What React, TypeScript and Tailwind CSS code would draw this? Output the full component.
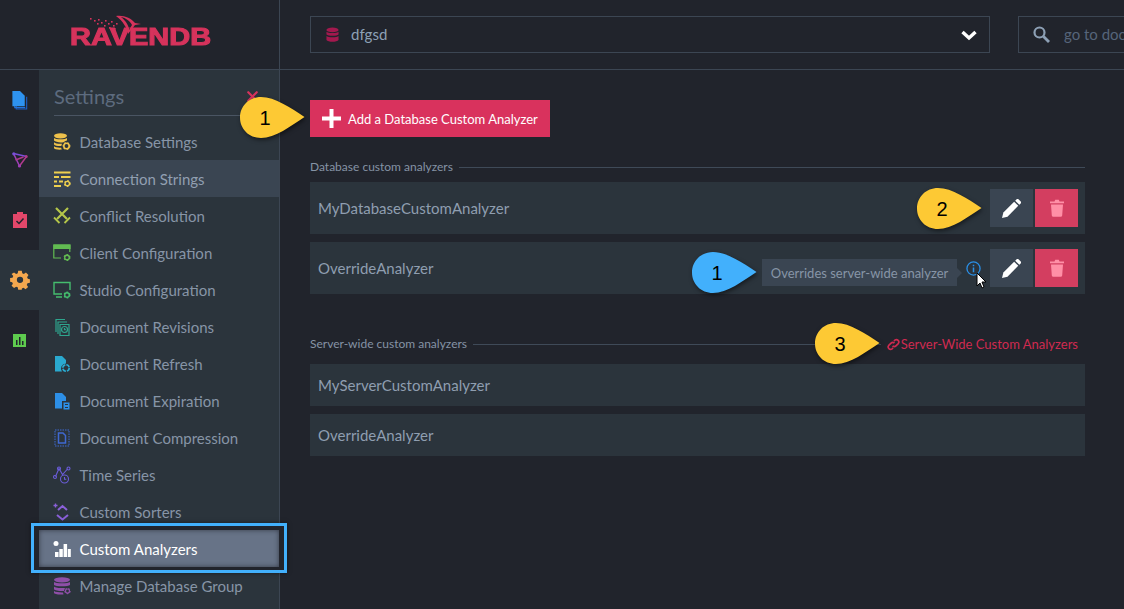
import React from 'react';
import { X } from 'lucide-react';

type IconProps = { className?: string };

const Gear = ({ cx, cy, r = 3.5 }: { cx: number; cy: number; r?: number }) => (
  <g>
    <circle cx={cx} cy={cy} r={r} fill="none" stroke="currentColor" strokeWidth={r * 0.6} />
    <circle cx={cx} cy={cy} r={r + 0.6} fill="none" stroke="currentColor" strokeWidth={1.2} strokeDasharray="1.6 1.6" />
  </g>
);

const DbSettings = ({ className }: IconProps) => (
  <svg viewBox="0 0 18 18" className={className} fill="currentColor">
    <ellipse cx="7.500" cy="2.800" rx="6.500" ry="2.600" />
    <path d="M1 5c1.500 1.700 11.500 1.700 13 0v2.400c-1.200.3-2.800 1-3.500 1.800-3.500.5-8.200 0-9.500-1.600z" />
    <path d="M1 9.300c1.500 1.300 5 1.700 8 1.400l-.7 2.300c-3.300.2-6.200-.4-7.300-1.600z" />
    <path d="M1 13.300c1.400 1.200 4.300 1.600 7.100 1.400l.7 1.900C5 17 1 16.200 1 15z" />
    <Gear cx={13.500} cy={13} r={2.700} />
  </svg>
);

const ConnStrings = ({ className }: IconProps) => (
  <svg viewBox="0 0 18 18" className={className} fill="currentColor">
    <path d="M1 1.500h16.500v2H1zM1 6h5v2H1zM8 6h9.500v2H8zM1 10.500h3v2H1zM6 10.500h4v2H6zM1 15h7v2H1z" />
    <Gear cx={14.300} cy={13.500} r={2.200} />
  </svg>
);

const Swords = ({ className }: IconProps) => (
  <svg viewBox="0 0 18 18" className={className} fill="none" stroke="currentColor" strokeWidth="2.200">
    <path d="M15 1 4 12M3 1l11 11" />
    <path d="M1 10.500l5.500 5.500M11.500 16l5.500-5.500" strokeWidth="1.800" />
  </svg>
);

const ClientCfg = ({ className }: IconProps) => (
  <svg viewBox="0 0 18 18" className={className} fill="none" stroke="currentColor" strokeWidth="1.200">
    <path d="M8 14H.8V1h16v7" />
    <path d="M1 1h16v3.400H1z" fill="currentColor" />
    <Gear cx={14} cy={13.500} r={2.300} />
  </svg>
);

const StudioCfg = ({ className }: IconProps) => (
  <svg viewBox="0 0 18 18" className={className} fill="none" stroke="currentColor" strokeWidth="1.400">
    <path d="M9 13H1V1.500h16V9M3 16h6" />
    <Gear cx={14} cy={14} r={2.300} />
  </svg>
);

const Revisions = ({ className }: IconProps) => (
  <svg viewBox="0 0 18 18" className={className} fill="none" stroke="currentColor" strokeWidth="1.200">
    <path d="M3 14V1.500h9M5 16V4h9M7 17.500h9V6.500H7z" />
    <circle cx="11.500" cy="11.500" r="3" />
    <path d="M11.500 10v1.700h1.300" />
  </svg>
);

const DocRefresh = ({ className }: IconProps) => (
  <svg viewBox="0 0 18 18" className={className} fill="currentColor">
    <path d="M2 1h7l4 4v3.500a5 5 0 0 0-4 8H2z" />
    <circle cx="13" cy="13" r="3.200" fill="none" stroke="currentColor" strokeWidth="1.600" strokeDasharray="4 1" />
  </svg>
);

const DocExpire = ({ className }: IconProps) => (
  <svg viewBox="0 0 18 18" className={className} fill="currentColor">
    <path d="M2 1h7l4 4v4H9v7.500H2z" />
    <path d="M10.500 10.500h6v7h-6zM12 12v1h3v-1zM12 15v1h3v-1z" fillRule="evenodd" />
  </svg>
);

const DocCompress = ({ className }: IconProps) => (
  <svg viewBox="0 0 18 18" className={className} fill="none" stroke="currentColor">
    <path d="M2 1h14v16H2z" strokeDasharray="1.500 1" />
    <path d="M5.500 4h4.500l2.500 2.500V14h-7z" strokeWidth="1.500" />
  </svg>
);

const TimeSeries = ({ className }: IconProps) => (
  <svg viewBox="0 0 18 18" className={className} fill="none" stroke="currentColor" strokeWidth="1.100">
    <path d="M2.500 10.500 6 2.500l3.500 6 5-5.500" />
    <circle cx="2" cy="11" r="1.500" />
    <circle cx="6" cy="2.500" r="1.500" />
    <circle cx="15.500" cy="2.500" r="1.500" />
    <circle cx="11.500" cy="13" r="4" />
    <path d="M11.500 11v2.200h1.800" />
  </svg>
);

const Sorters = ({ className }: IconProps) => (
  <svg viewBox="0 0 18 18" className={className} fill="none" stroke="currentColor" strokeWidth="2">
    <path d="M5 7l4.500-4 4.500 4M4 12l5.500 4.500 5.500-4.500" />
    <path d="M2.500 0.500v4M.5 2.500h4" strokeWidth="1.400" />
  </svg>
);

const Analyzers = ({ className }: IconProps) => (
  <svg viewBox="0 0 18 18" className={className} fill="currentColor">
    <circle cx="3" cy="3.500" r="2.500" />
    <path d="M2 12h3.500v5H2zM6.300 9h3.500v8H6.300zM10.600 4h3.500v13h-3.500zM14.800 9h3v8h-3z" />
  </svg>
);

const DbGroup = ({ className }: IconProps) => (
  <svg viewBox="0 0 18 18" className={className} fill="currentColor">
    <ellipse cx="9" cy="2.800" rx="8" ry="2.600" />
    <path d="M1 5c1.500 1.800 14.500 1.800 16 0v3c-1.500 1.800-14.500 1.800-16 0zM1 9.500c1.500 1.800 10 1.800 11 1.400l-1 3C7 14.200 2 13.500 1 12.200zM1 14c1.500 1.200 6 1.500 9 1.400l.5 2C6 18 1 17 1 16z" />
    <Gear cx={14.500} cy={14} r={2} />
  </svg>
);

const menuItems = [
  { label: 'Database Settings', Icon: DbSettings, color: 'text-[#eec14b]' },
  { label: 'Connection Strings', Icon: ConnStrings, color: 'text-[#eed04f]', hover: true },
  { label: 'Conflict Resolution', Icon: Swords, color: 'text-[#b4c64a]' },
  { label: 'Client Configuration', Icon: ClientCfg, color: 'text-[#62bb52]' },
  { label: 'Studio Configuration', Icon: StudioCfg, color: 'text-[#45bd6e]' },
  { label: 'Document Revisions', Icon: Revisions, color: 'text-[#2ea58e]' },
  { label: 'Document Refresh', Icon: DocRefresh, color: 'text-[#2aa9cf]' },
  { label: 'Document Expiration', Icon: DocExpire, color: 'text-[#2d8fe6]' },
  { label: 'Document Compression', Icon: DocCompress, color: 'text-[#3f68d2]' },
  { label: 'Time Series', Icon: TimeSeries, color: 'text-[#6a5cd8]' },
  { label: 'Custom Sorters', Icon: Sorters, color: 'text-[#8a60d8]' },
  { label: 'Custom Analyzers', Icon: Analyzers, color: 'text-white', selected: true },
  { label: 'Manage Database Group', Icon: DbGroup, color: 'text-[#8f4fa8]' },
];

const Logo = () => (
  <div className="relative w-[140px] h-[32px] mt-[16px]">
    <svg viewBox="0 0 70 20" className="absolute left-[19px] top-[-1px] w-[70px] h-[20px] text-[#d6335c]" fill="currentColor">
      <path d="M28 1c8-1 15 2 19 7l6 1-6 1-7 9c-1-6-5-13-12-18z" />
      <path d="M33 2c5 4 8 9 8 13l3-5c-2-4-6-7-11-8z" fill="#21242c" />
      {[[2, 3], [6, 5], [10, 4], [13, 7], [17, 5], [20, 8], [23, 6], [25, 10], [28, 8], [9, 8], [16, 10], [21, 12], [26, 13]].map(([x, y]) => (
        <rect key={`${x}-${y}`} x={x} y={y} width="1.600" height="1.600" />
      ))}
    </svg>
    <span className="absolute left-[1px] bottom-[-1px] font-['Liberation_Sans',sans-serif] font-bold text-[23px] leading-none text-[#d6335c] [-webkit-text-stroke:1px_#d6335c] origin-left scale-x-[1.26] whitespace-nowrap">
      RAVENDB
    </span>
  </div>
);

const Callout = ({ n, blue, className }: { n: number; blue?: boolean; className: string }) => (
  <div className={`absolute z-30 w-[65px] h-[41px] ${className}`}>
    <svg viewBox="0 0 65 41" className="absolute inset-0 w-[65px] h-[41px] drop-shadow-[1px_2px_2px_rgba(0,0,0,0.5)]">
      <path
        d="M64.500 20C51 11 35 0 21 0 9 0 0 9 0 20.500S9 41 21 41c14 0 30-12 43.500-21z"
        fill={blue ? '#42b0fc' : '#fdc934'}
      />
    </svg>
    <span className="absolute left-0 top-0 w-[50px] h-[41px] flex items-center justify-center font-['Liberation_Sans',sans-serif] text-[20px] text-black">
      {n}
    </span>
  </div>
);

const ActionButtons = () => (
  <div className="flex gap-[2px]">
    <button className="w-[43px] h-[38px] bg-[#3a4552] flex items-center justify-center">
      <svg viewBox="0 0 18 18" className="w-[19px] h-[19px]" fill="#fff">
        <path d="M0 18l1.300-5.200L11.500 2.600l3.900 3.900L5.200 16.700z" />
        <path d="M12.500 1.600 13.600.5a1.600 1.600 0 0 1 2.300 0l1.600 1.600a1.600 1.600 0 0 1 0 2.300l-1.100 1.100z" />
      </svg>
    </button>
    <button className="w-[43px] h-[38px] bg-[#d33e60] flex items-center justify-center">
      <svg viewBox="0 0 14 18" className="w-[14px] h-[18px]" fill="#ff8fa6">
        <path d="M0 2.500h4.500L5.200.8h3.600l.7 1.700H14v1.800H0z" />
        <path d="M1 5.500h12l-.8 11a1.500 1.500 0 0 1-1.500 1.300H3.300a1.500 1.500 0 0 1-1.500-1.300z" />
      </svg>
    </button>
  </div>
);

const SectionTitle = ({ title, children }: { title: string; children?: React.ReactNode }) => (
  <div className="flex items-center gap-[6px] h-[16px]">
    <span className="text-[12px] text-[#8593a5] whitespace-nowrap">{title}</span>
    <span className="flex-1 h-px bg-[#3f4a58]" />
    {children}
  </div>
);

const PlainRow = ({ name }: { name: string }) => (
  <div className="h-[42px] bg-[#2b343c] flex items-center px-[8px] text-[15px] text-[#8f9eb0]">{name}</div>
);

export default function App() {
  return (
    <div className="relative w-[1124px] h-[609px] overflow-hidden bg-[#21242c] font-['Lato',sans-serif]">
      <header className="h-[70px] flex border-b border-[#3c4653]">
        <div className="w-[280px] border-r border-[#3c4653] flex justify-center pr-[1px]">
          <Logo />
        </div>
        <div className="flex-1 flex items-start pt-[16px] pl-[30px] gap-[28px] overflow-hidden">
          <div className="w-[680px] h-[37px] shrink-0 border border-[#3c4653] flex items-center pl-[15px] pr-[10px]">
            <svg viewBox="0 0 14 16" className="w-[13px] h-[16px] text-[#a3194e]" fill="currentColor">
              <ellipse cx="7" cy="2.500" rx="6.500" ry="2.500" />
              <path d="M.5 4.500c1.500 1.800 11.500 1.800 13 0v3c-1.500 1.800-11.500 1.800-13 0zM.5 9c1.500 1.800 11.500 1.800 13 0v4.500c-1.500 2.500-11.500 2.500-13 0z" />
            </svg>
            <span className="ml-[12px] text-[15px] text-[#8da0b5]">dfgsd</span>
            <svg viewBox="0 0 16 11" className="ml-auto mr-[2px] mt-[2px] w-[16px] h-[11px]" fill="none" stroke="#fff" strokeWidth="3.400">
              <path d="M1.500 2 8 8l6.500-6" />
            </svg>
          </div>
          <div className="w-[200px] h-[37px] shrink-0 border border-[#3c4653] flex items-center pl-[14px]">
            <svg viewBox="0 0 17 17" className="w-[17px] h-[17px]" fill="none" stroke="#8da0b5">
              <circle cx="6.500" cy="6.500" r="5" strokeWidth="2.200" />
              <path d="M10.500 10.500l5.500 5.500" strokeWidth="2.800" />
            </svg>
            <span className="ml-[14px] text-[15px] text-[#56657a] whitespace-nowrap">go to document</span>
          </div>
        </div>
      </header>

      <div className="flex h-[539px]">
        <nav className="w-[39px] flex flex-col">
          <div className="h-[60px] flex items-center justify-center">
            <svg viewBox="0 0 16 20" className="w-[16px] h-[19px]" fill="none">
              <path d="M4 5v14h11V6" stroke="#1c5fc4" strokeWidth="1.200" />
              <path d="M2.500 3.500v14h11" stroke="#2373dc" strokeWidth="1.200" />
              <path d="M0 0h8l5 5v11H0z" fill="#2e93f0" />
            </svg>
          </div>
          <div className="h-[60px] flex items-center justify-center">
            <svg viewBox="0 0 16 16" className="w-[16px] h-[16px]" fill="none" strokeWidth="1.500">
              <path d="M1.500 1.500l13 3" stroke="#7a4fd8" />
              <path d="M1.500 1.500l6 12.500" stroke="#a040b8" />
              <path d="M14.500 4.500 7.500 14M3.500 8l8-3" stroke="#b03a8c" />
              <circle cx="1.800" cy="1.800" r="1.600" fill="#7a4fd8" />
              <circle cx="14.200" cy="4.500" r="1.500" fill="#b03a8c" />
              <circle cx="7.500" cy="14" r="1.600" fill="#a040b8" />
            </svg>
          </div>
          <div className="h-[60px] flex items-center justify-center">
            <svg viewBox="0 0 14 16" className="w-[14px] h-[16px]">
              <path d="M0 2h4V0h6v2h4v14H0z" fill="#e3476a" />
              <path d="M3.500 9l2.500 2.500 4.500-5" fill="none" stroke="#21242c" strokeWidth="1.500" />
            </svg>
          </div>
          <div className="h-[60px] bg-[#2b343c] flex items-center justify-center">
            <svg viewBox="0 0 20 20" className="w-[20px] h-[20px]" fill="#f4a74e">
              <path
                fillRule="evenodd"
                d="M8 0h4l.5 2.700 1.800.8L16.600 2l2.800 2.800-1.500 2.300.8 1.800 2.300.500v4l-2.700.5-.8 1.800 1.500 2.300-2.800 2.400-2.300-1.500-1.800.7L12 21H8l-.5-2.700-1.800-.7L3.400 19.100.6 16.700l1.500-2.300-.8-1.800L-1 12.100v-4l2.700-.5.8-1.800L.6 3.500 3.400 2l2.300 1.500 1.800-.8zM10 6.500a3.500 3.500 0 1 0 0 7 3.500 3.500 0 0 0 0-7z"
                transform="translate(1 .8) scale(.9)"
              />
            </svg>
          </div>
          <div className="h-[60px] flex items-center justify-center">
            <svg viewBox="0 0 13 13" className="w-[13px] h-[13px]">
              <path d="M0 0h13v13H0z" fill="#5ecb4e" />
              <path d="M3 6h1.500v5H3zM6 3h1.500v8H6zM9 7h1.500v4H9z" fill="#21242c" />
            </svg>
          </div>
        </nav>

        <aside className="w-[241px] bg-[#2b343c] border-r border-[#3c4653] flex flex-col">
          <div className="h-[53px] shrink-0 pl-[15px] pr-[17px]">
            <div className="h-[46px] border-b border-[#4a5563] flex items-end justify-between pb-[7px]">
              <span className="text-[20px] leading-[24px] text-[#5d6b7e]">Settings</span>
              <X className="w-[17px] h-[17px] text-[#d6335c] mb-[3px] mr-[1px]" strokeWidth={3} />
            </div>
          </div>
          {menuItems.map(({ label, Icon, color, hover, selected }) => (
            <div key={label} className="relative h-[37px] shrink-0">
              {selected && (
                <div className="absolute left-[-8px] right-[-8px] top-[-7px] bottom-[-6px] border-[3px] border-[#42b0fc] bg-[#21242c] shadow-[0_0_4px_rgba(0,0,0,0.5)]" />
              )}
              <div
                className={`relative h-[37px] flex items-center pl-[14px] ${
                  selected
                    ? 'bg-[#677387] text-white shadow-[inset_0_0_5px_rgba(33,36,44,0.7)]'
                    : hover
                      ? 'bg-[#3a4552] text-[#919fb1]'
                      : 'text-[#8795a7]'
                }`}
              >
                <Icon className={`w-[18px] h-[18px] shrink-0 ${color}`} />
                <span className="ml-[8.500px] mt-[2px] text-[15px] whitespace-nowrap">{label}</span>
              </div>
            </div>
          ))}
        </aside>

        <main className="flex-1 pl-[30px] pr-[39px] pt-[30px]">
          <button className="w-[240px] h-[37px] bg-[#d9325d] flex items-center pl-[12px] text-white text-[13px]">
            <svg viewBox="0 0 19 19" className="w-[19px] h-[19px]" fill="#fff">
              <path d="M7.500 0h4v7.500H19v4h-7.500V19h-4v-7.500H0v-4h7.500z" />
            </svg>
            <span className="ml-[7px] mt-[2px] whitespace-nowrap">Add a Database Custom Analyzer</span>
          </button>

          <div className="mt-[22px]">
            <SectionTitle title="Database custom analyzers" />
          </div>
          <div className="mt-[7px] flex flex-col gap-[8px]">
            <div className="h-[52px] bg-[#2b343c] flex items-center justify-between pl-[8px] pr-[7px] text-[15px] text-[#8f9eb0]">
              <span>MyDatabaseCustomAnalyzer</span>
              <ActionButtons />
            </div>
            <div className="relative h-[52px] bg-[#2b343c] flex items-center justify-between pl-[8px] pr-[7px] text-[15px] text-[#8f9eb0]">
              <span>OverrideAnalyzer</span>
              <ActionButtons />
              <div className="absolute left-[452px] top-[17px] w-[195px] h-[27px] bg-[#3a4552] flex items-center justify-center pt-[2px] text-[13px] text-[#8795a7] whitespace-nowrap">
                Overrides server-wide analyzer
                <span className="absolute right-[-5px] top-[9px] w-0 h-0 border-y-[5px] border-y-transparent border-l-[5px] border-l-[#3a4552]" />
              </div>
              <svg viewBox="0 0 16 16" className="absolute left-[656px] top-[19px] w-[15px] h-[15px]" fill="none" stroke="#2a8fe6">
                <circle cx="8" cy="8" r="7" strokeWidth="1.400" />
                <path d="M8 7v5M8 4v1.500" strokeWidth="1.600" />
              </svg>
              <svg viewBox="0 0 12 18" className="absolute left-[666px] top-[30px] w-[12px] h-[18px] z-20">
                <path d="M1 1v13l3-3 2 5 2-1-2-5h4z" fill="#fff" stroke="#000" strokeWidth="1" />
              </svg>
            </div>
          </div>

          <div className="mt-[42px]">
            <SectionTitle title="Server-wide custom analyzers">
              <span className="flex items-center pr-[7px] text-[13px] text-[#cf2a50] whitespace-nowrap">
                <svg viewBox="0 0 14 14" className="w-[13px] h-[13px] mr-px" fill="none" stroke="currentColor" strokeWidth="1.800">
                  <path d="M6 8.500a2.500 2.500 0 0 0 3.600 0l2.500-2.500a2.600 2.600 0 0 0-3.600-3.700L7.500 3.300" />
                  <path d="M8 5.500a2.500 2.500 0 0 0-3.600 0L1.900 8a2.600 2.600 0 0 0 3.600 3.700l1-1" />
                </svg>
                <span className="mt-[2px]">Server-Wide Custom Analyzers</span>
              </span>
            </SectionTitle>
          </div>
          <div className="mt-[12px] flex flex-col gap-[8px]">
            <PlainRow name="MyServerCustomAnalyzer" />
            <PlainRow name="OverrideAnalyzer" />
          </div>
        </main>
      </div>

      <Callout n={1} className="left-[240px] top-[97px]" />
      <Callout n={2} className="left-[917px] top-[188px]" />
      <Callout n={1} blue className="left-[692px] top-[252px]" />
      <Callout n={3} className="left-[815px] top-[323px]" />
    </div>
  );
}
